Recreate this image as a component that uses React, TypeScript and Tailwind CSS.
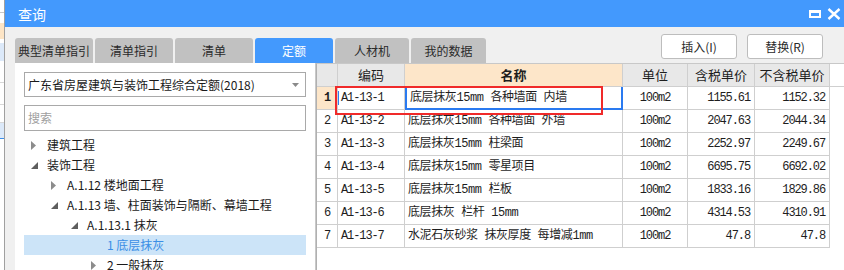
import React from "react";

const rows = [
  ["A1-13-1", "底层抹灰15mm 各种墙面 内墙", "100m2", "1155.61", "1152.32"],
  ["A1-13-2", "底层抹灰15mm 各种墙面 外墙", "100m2", "2047.63", "2044.34"],
  ["A1-13-3", "底层抹灰15mm 柱梁面", "100m2", "2252.97", "2249.67"],
  ["A1-13-4", "底层抹灰15mm 零星项目", "100m2", "6695.75", "6692.02"],
  ["A1-13-5", "底层抹灰15mm 栏板", "100m2", "1833.16", "1829.86"],
  ["A1-13-6", "底层抹灰 栏杆 15mm", "100m2", "4314.53", "4310.91"],
  ["A1-13-7", "水泥石灰砂浆 抹灰厚度 每增减1mm", "100m2", "47.8", "47.8"],
];

const tabs = ["典型清单指引", "清单指引", "清单", "定额", "人材机", "我的数据"];

const tree = [
  { level: 0, text: "建筑工程", arrow: "closed" },
  { level: 0, text: "装饰工程", arrow: "open" },
  { level: 1, text: "A.1.12 楼地面工程", arrow: "closed" },
  { level: 1, text: "A.1.13 墙、柱面装饰与隔断、幕墙工程", arrow: "open" },
  { level: 2, text: "A.1.13.1 抹灰", arrow: "open" },
  { level: 3, text: "1 底层抹灰", arrow: "none", selected: true },
  { level: 3, text: "2 一般抹灰", arrow: "closed" },
];

const mono = "font-['Liberation_Mono','Noto_Sans_CJK_SC',monospace] text-[12px] tracking-[-1.1px]";

function Arrow({ kind }: { kind: string }) {
  if (kind === "closed")
    return (
      <svg width="6" height="9" viewBox="0 0 6 9">
        <path d="M0 0 L5 4.5 L0 9 Z" fill="#8c8c8c" />
      </svg>
    );
  if (kind === "open")
    return (
      <svg width="7" height="7" viewBox="0 0 7 7">
        <path d="M7 0 L7 7 L0 7 Z" fill="#5e5e5e" />
      </svg>
    );
  return null;
}

function LeftStrip() {
  return (
    <div className="w-[5px] flex flex-col bg-white border-r border-[#a0a0a0]">
      <div className="h-[12px] shrink-0" />
      <div className="h-[1px] shrink-0 bg-[#c8c8c8]" />
      <div className="h-[10px] shrink-0" />
      <div className="h-[16px] shrink-0 bg-[#fde5c6]" />
      <div className="h-[4px] shrink-0" />
      <div className="h-[18px] shrink-0 bg-[#dce9f9]" />
      <div className="h-[22px] shrink-0 border-b border-[#d8d8d8]" />
      <div className="h-[22px] shrink-0 border-b border-[#d8d8d8]" />
      <div className="h-[18px] shrink-0 border-b border-[#d8d8d8]" />
      <div className="h-[16px] shrink-0 bg-[#dce9f9] border-b border-[#3c8ee8]" />
    </div>
  );
}

export default function App() {
  return (
    <div className="w-[844px] h-[270px] flex overflow-hidden bg-[#f0f0f0] font-['Noto_Sans_CJK_SC',sans-serif] text-[#1e1e1e]">
      <LeftStrip />
      <div className="flex-1 flex flex-col min-w-0 overflow-hidden">
        {/* title bar */}
        <div className="h-[27px] shrink-0 bg-[#4399fd] flex items-center pl-[13px]">
          <span className="text-white text-[14px] leading-none">查询</span>
          <div className="ml-auto flex items-center gap-[6px] -mr-[1px]">
            <div className="w-[12px] h-[8px] border-2 border-t-[3px] border-white" />
            <svg width="18" height="12" viewBox="0 0 18 12">
              <path d="M1.5 1 L12.5 11 M12.5 1 L1.5 11" stroke="white" strokeWidth="2.4" />
            </svg>
          </div>
        </div>

        {/* tabs + buttons */}
        <div className="h-[36px] shrink-0 flex items-start pl-[10px] pr-[21px]">
          <div className="flex gap-[2px] mt-[11px]">
            {tabs.map((t, i) => (
              <div
                key={t}
                className={
                  "h-[25px] flex items-center justify-center text-[12px] rounded-t-[3px] " +
                  (i === 3 ? "bg-[#4399fd] text-white " : "bg-[#c1c1c1] text-[#2a2a2a] ") +
                  (i < 4 ? "w-[78px]" : i === 4 ? "w-[74px]" : "w-[75px]")
                }
              >
                {t}
              </div>
            ))}
          </div>
          <div className="ml-auto flex gap-[10px] mt-[7px]">
            <button className="w-[76px] h-[25px] bg-white border border-[#bdbdbd] rounded-[3px] text-[12px] text-[#2a2a2a]">
              插入(I)
            </button>
            <button className="w-[76px] h-[25px] bg-white border border-[#bdbdbd] rounded-[3px] text-[12px] text-[#2a2a2a]">
              替换(R)
            </button>
          </div>
        </div>

        {/* content */}
        <div className="flex-1 flex pl-[10px] min-h-0">
          {/* left panel */}
          <div className="w-[301px] shrink-0 bg-white border-r border-[#c8c8c8] px-[9px] pt-[9px] flex flex-col overflow-hidden">
            <div className="h-[25px] shrink-0 border border-[#a9a9a9] flex items-center pl-[3px] pr-[6px] text-[12px] text-[#1a1a1a]">
              <span>广东省房屋建筑与装饰工程综合定额(2018)</span>
              <svg className="ml-auto" width="7" height="4" viewBox="0 0 7 4">
                <path d="M0 0 L7 0 L3.5 4 Z" fill="#8a8a8a" />
              </svg>
            </div>
            <div className="mt-[8px] h-[26px] shrink-0 border border-[#a9a9a9] flex items-center pl-[3px] text-[12px] text-[#a0a0a0]">
              搜索
            </div>
            <div className="mt-[4px] flex flex-col shrink-0">
              {tree.map((n) => (
                <div
                  key={n.text}
                  className={
                    "h-[20px] shrink-0 flex items-center text-[12px] " +
                    (n.selected ? "bg-[#cce4f8] text-[#3a8ee6]" : "text-[#1a1a1a]")
                  }
                  style={{ paddingLeft: 7 + n.level * 20 }}
                >
                  <span className="w-[16px] flex items-center">
                    <Arrow kind={n.arrow} />
                  </span>
                  <span>{n.text}</span>
                </div>
              ))}
            </div>
          </div>

          {/* table */}
          <div className="flex-1 bg-white relative border-t border-[#c8c8c8] border-l border-l-[#b0b0b0]">
            <div className="flex h-[23px] border-b border-[#cfcfcf] text-[13px]">
              <div className="w-[21px] bg-[#e8e8e8] border-r border-[#cfcfcf]" />
              <div className="w-[67px] bg-[#e8e8e8] border-r border-[#cfcfcf] flex items-center justify-center">编码</div>
              <div className="w-[218px] bg-[#fde6c9] border-r border-[#cfcfcf] flex items-center justify-center font-bold">名称</div>
              <div className="w-[65px] bg-[#e8e8e8] border-r border-[#cfcfcf] flex items-center justify-center">单位</div>
              <div className="w-[67px] bg-[#e8e8e8] border-r border-[#cfcfcf] flex items-center justify-center">含税单价</div>
              <div className="w-[75px] bg-[#e8e8e8] border-r border-[#cfcfcf] flex items-center justify-center">不含税单价</div>
            </div>
            {rows.map((r, i) => (
              <div key={r[0]} className="flex h-[23px] w-[513px] border-b border-[#cfcfcf]">
                <div
                  className={
                    "w-[21px] border-r border-[#cfcfcf] flex items-center justify-center " +
                    mono +
                    (i === 0 ? " bg-[#fde6c9] font-bold" : "")
                  }
                >
                  {i + 1}
                </div>
                <div className={"w-[67px] border-r border-[#cfcfcf] flex items-center pl-[3px] relative " + mono}>
                  {i === 0 && <div className="absolute left-0 top-[4px] h-[14px] w-[1px] bg-[#2f7ff0]" />}
                  {r[0]}
                </div>
                <div
                  className={
                    "w-[218px] border-r border-[#cfcfcf] flex items-center pl-[3px] text-[12px] font-['Liberation_Mono','Noto_Sans_CJK_SC',monospace] tracking-[-0.4px] " +
                    (i === 0 ? "border-l-2 border-l-[#2a7af0] border-b-2 border-b-[#2a7af0] border-r-2 border-r-[#2a7af0] -mb-[1px] pl-[1px]" : "")
                  }
                >
                  {r[1]}
                </div>
                <div className={"w-[65px] border-r border-[#cfcfcf] flex items-center justify-center " + mono}>{r[2]}</div>
                <div className={"w-[67px] border-r border-[#cfcfcf] flex items-center justify-end pr-[4px] " + mono}>{r[3]}</div>
                <div className={"w-[75px] border-r border-[#cfcfcf] flex items-center justify-end pr-[4px] " + mono}>{r[4]}</div>
              </div>
            ))}
            <div className="absolute left-[18px] top-[22px] w-[268px] h-[29px] border-2 border-[#f02a2a]" />
          </div>
        </div>
      </div>
    </div>
  );
}
